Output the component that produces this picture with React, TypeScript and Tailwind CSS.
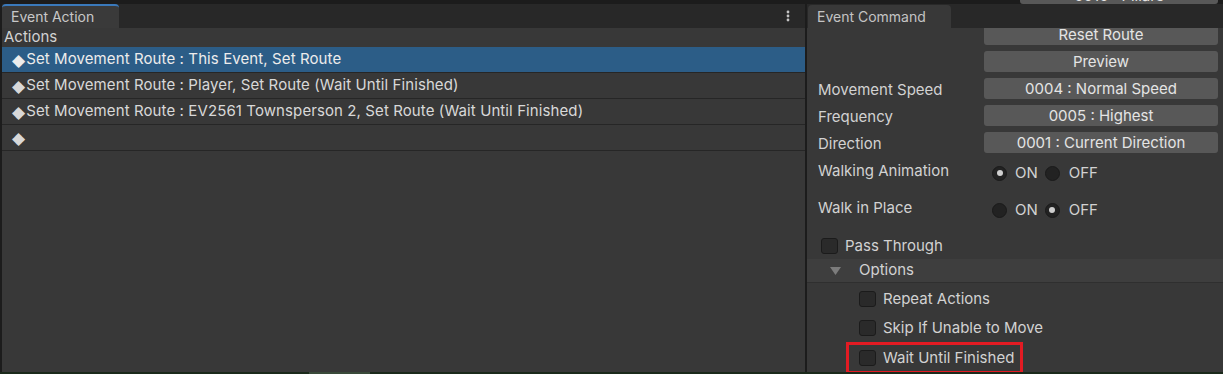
import React from "react";

const rows = [
  "Set Movement Route : This Event, Set Route",
  "Set Movement Route : Player, Set Route (Wait Until Finished)",
  "Set Movement Route : EV2561 Townsperson 2, Set Route (Wait Until Finished)",
  "",
];

function Btn({ label }: { label: string }) {
  return (
    <div className="w-[234px] h-[21px] rounded-[3px] bg-[#585858] text-[#e4e4e4] text-[15px] leading-[21px] text-center">
      {label}
    </div>
  );
}

function Radio({ on }: { on: boolean }) {
  return (
    <span className="w-[15px] h-[15px] rounded-full bg-[#222222] border border-[#1a1a1a] flex items-center justify-center">
      {on && <span className="w-[6px] h-[6px] rounded-full bg-[#cfcfcf]" />}
    </span>
  );
}

function Check() {
  return <span className="w-[17px] h-[16px] rounded-[3px] bg-[#2a2a2a] border border-[#1b1b1b]" />;
}

function ButtonRow({ label, value }: { label?: string; value: string }) {
  return (
    <div className="h-[27px] flex items-center">
      <div className="w-[177px] pl-[11px] pt-[3px] text-[15px] text-[#d2d2d2]">{label}</div>
      <Btn label={value} />
    </div>
  );
}

function RadioRow({ label, on }: { label: string; on: boolean }) {
  return (
    <div className="h-[30px] flex items-center text-[15px] text-[#d2d2d2]">
      <div className="w-[185px] pl-[11px] -mt-[4px]">{label}</div>
      <Radio on={on} />
      <span className="ml-[8px] mr-[7px]">ON</span>
      <Radio on={!on} />
      <span className="ml-[9px]">OFF</span>
    </div>
  );
}

export default function App() {
  return (
    <div className="w-[1223px] h-[374px] bg-[#1c1c1c] flex flex-col overflow-hidden font-[Inter,sans-serif]">
      {/* top strip with the clipped button from the panel above */}
      <div className="h-[4px] flex overflow-hidden">
        <div className="ml-[1020px] w-[198px] h-[4px] rounded-b-[3px] bg-[#585858] overflow-hidden">
          <div className="-mt-[13px] text-center text-[15px] leading-[17px] text-[#e4e4e4]">0010 : Pillars</div>
        </div>
      </div>

      <div className="flex-1 flex min-h-0">
        {/* Event Action */}
        <div className="ml-[2px] w-[803px] flex flex-col bg-[#383838]">
          <div className="h-[24px] bg-[#282828] flex items-stretch">
            <div className="w-[117px] rounded-t-[4px] border-t-2 border-[#3a79bb] bg-[#3a3a3a] pl-[9px] text-[14px] leading-[21px] text-[#c8c8c8]">
              Event Action
            </div>
            <div className="flex-1" />
            <svg width="4" height="12" viewBox="0 0 4 12" className="mt-[6px] mr-[15px]">
              <circle cx="2" cy="2" r="1.4" fill="#c4c4c4" />
              <circle cx="2" cy="6" r="1.4" fill="#c4c4c4" />
              <circle cx="2" cy="10" r="1.4" fill="#c4c4c4" />
            </svg>
          </div>
          <div className="h-[19px] pl-[2px] text-[15px] leading-[18px] text-[#d2d2d2]">Actions</div>
          {rows.map((r, i) => (
            <div
              key={i}
              className={`h-[26px] border-b border-[#262626] pl-[10px] flex items-center text-[15px] tracking-[0.1px] ${
                i === 0 ? "bg-[#2c5d87] text-[#ececec]" : "text-[#d8d8d8]"
              }`}
            >
              <span className="font-['DejaVu_Sans',sans-serif] text-[17px] leading-[20px] mr-[1px]">◆</span>
              {r}
            </div>
          ))}
        </div>

        <div className="w-[2px] bg-[#1c1c1c]" />

        {/* Event Command */}
        <div className="flex-1 flex flex-col bg-[#383838]">
          <div className="h-[24px] bg-[#282828] flex items-end">
            <div className="ml-[1px] w-[143px] h-[23px] rounded-t-[4px] bg-[#383838] pl-[9px] text-[14px] leading-[23px] text-[#c4c4c4]">
              Event Command
            </div>
          </div>
          <div className="flex-1 overflow-hidden">
            <div className="-mt-[7px]">
              <ButtonRow value="Reset Route" />
              <ButtonRow value="Preview" />
              <ButtonRow label="Movement Speed" value="0004 : Normal Speed" />
              <ButtonRow label="Frequency" value="0005 : Highest" />
              <ButtonRow label="Direction" value="0001 : Current Direction" />
            </div>
            <div className="mt-[2px]">
              <RadioRow label="Walking Animation" on={true} />
            </div>
            <div className="mt-[7px]">
              <RadioRow label="Walk in Place" on={false} />
            </div>
            <div className="mt-[10px] h-[22px] pl-[14px] flex items-center gap-[7px] text-[15px] text-[#d2d2d2]">
              <Check />
              Pass Through
            </div>
            <div className="mt-[2px] h-[24px] bg-[#3e3e3e] border-b border-[#2f2f2f] pl-[23px] flex items-center text-[15px] text-[#d2d2d2]">
              <svg width="11" height="8" viewBox="0 0 11 8" className="mt-[1px]">
                <path d="M0 0 L11 0 L5.5 8 Z" fill="#7c7c7c" />
              </svg>
              <span className="ml-[18px]">Options</span>
            </div>
            <div className="mt-[5px] h-[22px] pl-[52px] flex items-center gap-[7px] text-[15px] text-[#d2d2d2]">
              <Check />
              Repeat Actions
            </div>
            <div className="mt-[7px] h-[22px] pl-[52px] flex items-center gap-[7px] text-[15px] text-[#d2d2d2]">
              <Check />
              Skip If Unable to Move
            </div>
            <div className="mt-[3px] ml-[39px] w-[177px] h-[32px] border-[3px] border-[#e31b23] pl-[10px] flex items-center gap-[7px] text-[15px] text-[#d2d2d2]">
              <Check />
              Wait Until Finished
            </div>
          </div>
        </div>
      </div>

      <div className="h-[2px] bg-[#1b2a1b] flex">
        <div className="ml-[309px] w-[61px] bg-[#3a4a3a]" />
      </div>
    </div>
  );
}
